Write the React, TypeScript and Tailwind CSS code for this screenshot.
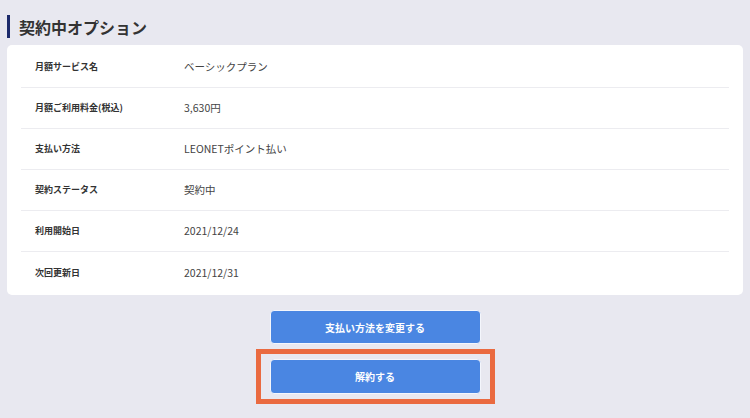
import React from 'react';

const rows: { label: string; value: string }[] = [
  { label: '月額サービス名', value: 'ベーシックプラン' },
  { label: '月額ご利用料金(税込)', value: '3,630円' },
  { label: '支払い方法', value: 'LEONETポイント払い' },
  { label: '契約ステータス', value: '契約中' },
  { label: '利用開始日', value: '2021/12/24' },
  { label: '次回更新日', value: '2021/12/31' },
];

const font = { fontFamily: '"Noto Sans CJK JP", "Noto Sans", sans-serif' };

export default function App() {
  return (
    <div className="w-[750px] h-[418px] bg-[#e8e8f0] overflow-hidden px-[7px] pt-[15px]" style={font}>
      <div className="flex items-center h-[23px]">
        <div className="w-[3px] h-[23px] bg-[#1c2a6b]" />
        <h1 className="ml-[9px] text-[16px] font-bold text-[#333] leading-none">
          契約中オプション
        </h1>
      </div>

      <div className="mt-[7px] bg-white rounded-[5px] px-[14px] pt-[2px] pb-[2px]">
        {rows.map((r, i) => (
          <div
            key={r.label}
            className={`flex items-center h-[41px] ${i < rows.length - 1 ? 'border-b border-[#ececf0]' : ''}`}
          >
            <div className="w-[163px] pl-[14px] text-[9px] font-bold text-[#333]">{r.label}</div>
            <div className="text-[10.5px] text-[#444]">{r.value}</div>
          </div>
        ))}
      </div>

      <div className="flex flex-col items-center mt-[15px]">
        <button className="w-[211px] h-[34px] rounded-[4px] bg-[#4a86e2] border border-[#f4f6fc] text-white text-[10px] font-bold">
          支払い方法を変更する
        </button>
        <div className="mt-[5px] border-[5px] border-[#ea6a40] px-[9px] py-[5px]">
          <button className="w-[211px] h-[35px] rounded-[4px] bg-[#4a86e2] border border-[#f4f6fc] text-white text-[10px] font-bold">
            解約する
          </button>
        </div>
      </div>
    </div>
  );
}
